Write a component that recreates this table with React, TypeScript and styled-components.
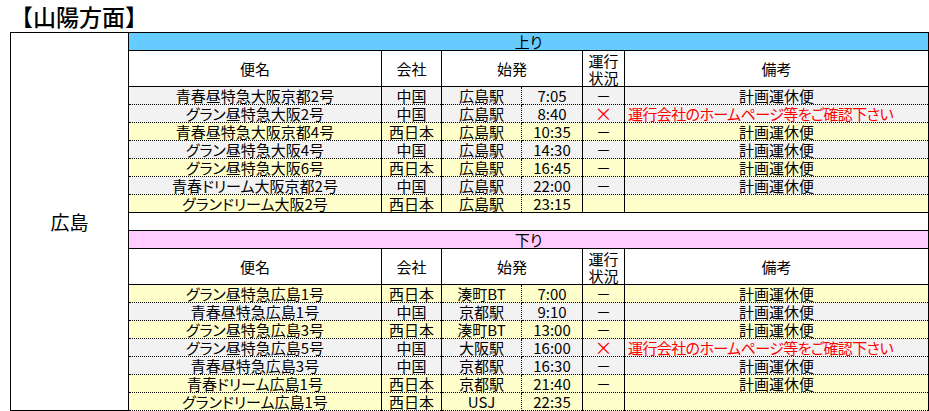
import React from "react";
import styled, { createGlobalStyle } from "styled-components";

const Global = createGlobalStyle`
  html, body { margin: 0; padding: 0; background: #ffffff; }
  body { font-family: "Noto Sans CJK JP", "Noto Sans", sans-serif; color: #000; }
`;

const Page = styled.div`
  padding: 0 0 0 10px;
  width: 929px;
  box-sizing: border-box;
`;

const Title = styled.h1`
  margin: 0;
  height: 32px;
  line-height: 32px;
  font-size: 23px;
  font-weight: 500;
  letter-spacing: 0;
`;

const Table = styled.table`
  border-collapse: collapse;
  table-layout: fixed;
  width: 918px;
  font-size: 15px;
  font-feature-settings: "palt";
`;

const AreaCell = styled.td`
  border: 1px solid #000;
  text-align: center;
  vertical-align: middle;
  font-size: 19px;
  padding: 0;
  background: #fff;
`;

const DirCell = styled.td<{ $bg: string }>`
  background: ${(p) => p.$bg};
  border-top: 1px solid #000;
  border-bottom: 1px solid #000;
  border-right: 1px solid #000;
  text-align: center;
  padding: 0;
  height: 17px;
  line-height: 17px;
`;

const BlankCell = styled.td`
  border-top: 1px solid #000;
  border-bottom: 1px solid #000;
  border-right: 1px solid #000;
  padding: 0;
  height: 17px;
`;

const HeadCell = styled.td`
  border: 1px solid #000;
  text-align: center;
  vertical-align: middle;
  padding: 0;
  height: 35px;
  line-height: 17px;
  background: #fff;
`;

const DataRow = styled.tr<{ $bg: string }>`
  background: ${(p) => p.$bg};
`;

const Cell = styled.td<{ $left?: boolean; $red?: boolean; $dotR?: boolean; $dotL?: boolean }>`
  border-left: ${(p) => (p.$dotL ? "1px dotted #000" : "1px solid #000")};
  border-right: ${(p) => (p.$dotR ? "1px dotted #000" : "1px solid #000")};
  border-top: 1px dotted #000;
  border-bottom: 1px dotted #000;
  padding: ${(p) => (p.$left ? "0 0 0 3px" : "0")};
  height: 17px;
  line-height: 17px;
  text-align: ${(p) => (p.$left ? "left" : "center")};
  color: ${(p) => (p.$red ? "#ff0000" : "#000")};
  letter-spacing: ${(p) => (p.$left ? "-0.6px" : "0")};
  white-space: nowrap;
  overflow: visible;
`;

const Cross = styled.span`
  display: inline-block;
  height: 17px;
  line-height: 17px;
  vertical-align: top;
  font-size: 18px;
  color: #ff0000;
`;

const GRAY = "#f2f2f2";
const YELLOW = "#ffffcc";

type Row = {
  name: string;
  co: string;
  st: string;
  time: string;
  status: "" | "－" | "×";
  note: string;
};

const up: Row[] = [
  { name: "青春昼特急大阪京都2号", co: "中国", st: "広島駅", time: "7:05", status: "－", note: "計画運休便" },
  { name: "グラン昼特急大阪2号", co: "中国", st: "広島駅", time: "8:40", status: "×", note: "運行会社のホームページ等をご確認下さい" },
  { name: "青春昼特急大阪京都4号", co: "西日本", st: "広島駅", time: "10:35", status: "－", note: "計画運休便" },
  { name: "グラン昼特急大阪4号", co: "中国", st: "広島駅", time: "14:30", status: "－", note: "計画運休便" },
  { name: "グラン昼特急大阪6号", co: "西日本", st: "広島駅", time: "16:45", status: "－", note: "計画運休便" },
  { name: "青春ドリーム大阪京都2号", co: "中国", st: "広島駅", time: "22:00", status: "－", note: "計画運休便" },
  { name: "グランドリーム大阪2号", co: "西日本", st: "広島駅", time: "23:15", status: "", note: "" },
];

const down: Row[] = [
  { name: "グラン昼特急広島1号", co: "西日本", st: "湊町BT", time: "7:00", status: "－", note: "計画運休便" },
  { name: "青春昼特急広島1号", co: "中国", st: "京都駅", time: "9:10", status: "－", note: "計画運休便" },
  { name: "グラン昼特急広島3号", co: "西日本", st: "湊町BT", time: "13:00", status: "－", note: "計画運休便" },
  { name: "グラン昼特急広島5号", co: "中国", st: "大阪駅", time: "16:00", status: "×", note: "運行会社のホームページ等をご確認下さい" },
  { name: "青春昼特急広島3号", co: "中国", st: "京都駅", time: "16:30", status: "－", note: "計画運休便" },
  { name: "青春ドリーム広島1号", co: "西日本", st: "京都駅", time: "21:40", status: "－", note: "計画運休便" },
  { name: "グランドリーム広島1号", co: "西日本", st: "USJ", time: "22:35", status: "", note: "" },
];

const Header = () => (
  <tr>
    <HeadCell>便名</HeadCell>
    <HeadCell>会社</HeadCell>
    <HeadCell colSpan={2}>始発</HeadCell>
    <HeadCell>
      運行
      <br />
      状況
    </HeadCell>
    <HeadCell>備考</HeadCell>
  </tr>
);

const Rows = ({ rows }: { rows: Row[] }) => (
  <>
    {rows.map((r, i) => (
      <DataRow key={i} $bg={r.co === "中国" ? GRAY : YELLOW}>
        <Cell>{r.name}</Cell>
        <Cell>{r.co}</Cell>
        <Cell $dotR>{r.st}</Cell>
        <Cell $dotL>{r.time}</Cell>
        <Cell>{r.status === "×" ? <Cross>×</Cross> : r.status}</Cell>
        <Cell $left={r.status === "×"} $red={r.status === "×"}>
          {r.note}
        </Cell>
      </DataRow>
    ))}
  </>
);

export default function App() {
  return (
    <Page>
      <Global />
      <Title>【山陽方面】</Title>
      <Table>
        <colgroup>
          <col style={{ width: 118 }} />
          <col style={{ width: 253 }} />
          <col style={{ width: 60 }} />
          <col style={{ width: 80 }} />
          <col style={{ width: 61 }} />
          <col style={{ width: 42 }} />
          <col style={{ width: 304 }} />
        </colgroup>
        <tbody>
          <tr>
            <AreaCell rowSpan={19}>広島</AreaCell>
            <DirCell colSpan={6} $bg="#66ccff">上り</DirCell>
          </tr>
          <Header />
          <Rows rows={up} />
          <tr>
            <BlankCell colSpan={6} />
          </tr>
          <tr>
            <DirCell colSpan={6} $bg="#ffccff">下り</DirCell>
          </tr>
          <Header />
          <Rows rows={down} />
        </tbody>
      </Table>
    </Page>
  );
}
